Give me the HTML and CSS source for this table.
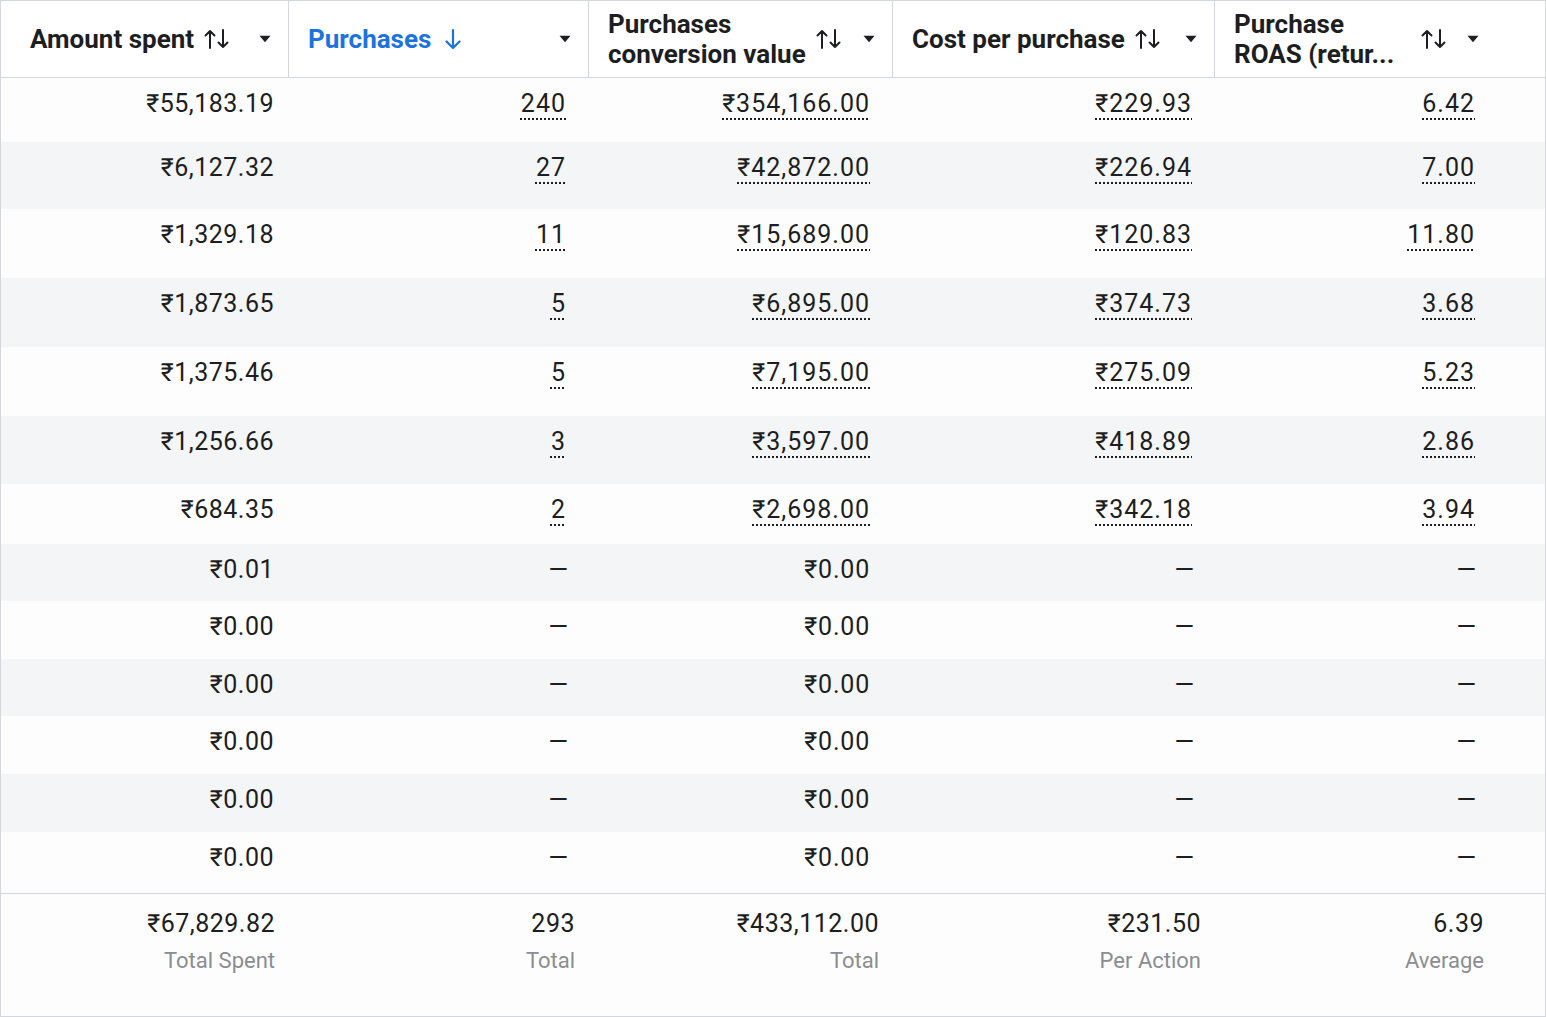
FILE: index.html
```html
<!DOCTYPE html>
<html lang="en">
<head>
<meta charset="utf-8">
<title>Ads table</title>
<link rel="stylesheet" href="styles.css">
</head>
<body>
<svg width="0" height="0" class="defs" aria-hidden="true">
  <defs>
    <symbol id="sort" viewBox="0 0 26 22">
      <path d="M6 20V3M1.5 7.5L6 3l4.5 4.5M19 2v17M14.5 14.5L19 19l4.5-4.5" fill="none" stroke="currentColor" stroke-width="2" stroke-linecap="round" stroke-linejoin="round"/>
    </symbol>
    <symbol id="caret" viewBox="0 0 12 8">
      <path d="M0.5 0.8h11L6 7.2z" fill="currentColor"/>
    </symbol>
    <symbol id="down" viewBox="0 0 16 22">
      <path d="M8 2v18M1.5 13.5L8 20l6.5-6.5" fill="none" stroke="currentColor" stroke-width="2.2" stroke-linecap="round" stroke-linejoin="round"/>
    </symbol>
  </defs>
</svg>
<div class="table">
  <div class="row head">
    <div class="hcell c1">
      <span class="label">Amount spent</span>
      <svg class="sort"><use href="#sort"/></svg>
      <svg class="caret"><use href="#caret"/></svg>
    </div>
    <div class="hcell c2 active">
      <span class="label">Purchases</span>
      <svg class="down"><use href="#down"/></svg>
      <svg class="caret"><use href="#caret"/></svg>
    </div>
    <div class="hcell c3">
      <span class="label">Purchases<br>conversion value</span>
      <svg class="sort"><use href="#sort"/></svg>
      <svg class="caret"><use href="#caret"/></svg>
    </div>
    <div class="hcell c4">
      <span class="label">Cost per purchase</span>
      <svg class="sort"><use href="#sort"/></svg>
      <svg class="caret"><use href="#caret"/></svg>
    </div>
    <div class="hcell c5">
      <span class="label fixed">Purchase<br>ROAS (retur...</span>
      <svg class="sort"><use href="#sort"/></svg>
      <svg class="caret"><use href="#caret"/></svg>
    </div>
  </div>

  <div class="row body h64">
    <div class="cell c1">₹55,183.19</div>
    <div class="cell c2"><span class="link">240</span></div>
    <div class="cell c3"><span class="link">₹354,166.00</span></div>
    <div class="cell c4"><span class="link">₹229.93</span></div>
    <div class="cell c5"><span class="link">6.42</span></div>
  </div>
  <div class="row body alt h67">
    <div class="cell c1">₹6,127.32</div>
    <div class="cell c2"><span class="link">27</span></div>
    <div class="cell c3"><span class="link">₹42,872.00</span></div>
    <div class="cell c4"><span class="link">₹226.94</span></div>
    <div class="cell c5"><span class="link">7.00</span></div>
  </div>
  <div class="row body h69">
    <div class="cell c1">₹1,329.18</div>
    <div class="cell c2"><span class="link">11</span></div>
    <div class="cell c3"><span class="link">₹15,689.00</span></div>
    <div class="cell c4"><span class="link">₹120.83</span></div>
    <div class="cell c5"><span class="link">11.80</span></div>
  </div>
  <div class="row body alt h69">
    <div class="cell c1">₹1,873.65</div>
    <div class="cell c2"><span class="link">5</span></div>
    <div class="cell c3"><span class="link">₹6,895.00</span></div>
    <div class="cell c4"><span class="link">₹374.73</span></div>
    <div class="cell c5"><span class="link">3.68</span></div>
  </div>
  <div class="row body h69">
    <div class="cell c1">₹1,375.46</div>
    <div class="cell c2"><span class="link">5</span></div>
    <div class="cell c3"><span class="link">₹7,195.00</span></div>
    <div class="cell c4"><span class="link">₹275.09</span></div>
    <div class="cell c5"><span class="link">5.23</span></div>
  </div>
  <div class="row body alt h68">
    <div class="cell c1">₹1,256.66</div>
    <div class="cell c2"><span class="link">3</span></div>
    <div class="cell c3"><span class="link">₹3,597.00</span></div>
    <div class="cell c4"><span class="link">₹418.89</span></div>
    <div class="cell c5"><span class="link">2.86</span></div>
  </div>
  <div class="row body h60">
    <div class="cell c1">₹684.35</div>
    <div class="cell c2"><span class="link">2</span></div>
    <div class="cell c3"><span class="link">₹2,698.00</span></div>
    <div class="cell c4"><span class="link">₹342.18</span></div>
    <div class="cell c5"><span class="link">3.94</span></div>
  </div>
  <div class="row body alt h57">
    <div class="cell c1">₹0.01</div>
    <div class="cell c2 dash">—</div>
    <div class="cell c3">₹0.00</div>
    <div class="cell c4 dash">—</div>
    <div class="cell c5 dash">—</div>
  </div>
  <div class="row body h58">
    <div class="cell c1">₹0.00</div>
    <div class="cell c2 dash">—</div>
    <div class="cell c3">₹0.00</div>
    <div class="cell c4 dash">—</div>
    <div class="cell c5 dash">—</div>
  </div>
  <div class="row body alt h57">
    <div class="cell c1">₹0.00</div>
    <div class="cell c2 dash">—</div>
    <div class="cell c3">₹0.00</div>
    <div class="cell c4 dash">—</div>
    <div class="cell c5 dash">—</div>
  </div>
  <div class="row body h58">
    <div class="cell c1">₹0.00</div>
    <div class="cell c2 dash">—</div>
    <div class="cell c3">₹0.00</div>
    <div class="cell c4 dash">—</div>
    <div class="cell c5 dash">—</div>
  </div>
  <div class="row body alt h58">
    <div class="cell c1">₹0.00</div>
    <div class="cell c2 dash">—</div>
    <div class="cell c3">₹0.00</div>
    <div class="cell c4 dash">—</div>
    <div class="cell c5 dash">—</div>
  </div>
  <div class="row body h61">
    <div class="cell c1">₹0.00</div>
    <div class="cell c2 dash">—</div>
    <div class="cell c3">₹0.00</div>
    <div class="cell c4 dash">—</div>
    <div class="cell c5 dash">—</div>
  </div>

  <div class="row foot">
    <div class="fcell c1"><span class="val">₹67,829.82</span><span class="sub">Total Spent</span></div>
    <div class="fcell c2"><span class="val">293</span><span class="sub">Total</span></div>
    <div class="fcell c3"><span class="val">₹433,112.00</span><span class="sub">Total</span></div>
    <div class="fcell c4"><span class="val">₹231.50</span><span class="sub">Per Action</span></div>
    <div class="fcell c5"><span class="val">6.39</span><span class="sub">Average</span></div>
  </div>
</div>
</body>
</html>
```
FILE: styles.css
```css
* { box-sizing: border-box; }

html, body {
  margin: 0;
  padding: 0;
  background: #ffffff;
}

body {
  font-family: Roboto, "Liberation Sans", Arial, sans-serif;
  color: #1c1e21;
  width: 1546px;
  height: 1017px;
  overflow: hidden;
}

.defs {
  position: absolute;
  width: 0;
  height: 0;
}

.table {
  width: 1546px;
  height: 1017px;
  border: 1px solid #d3d6da;
  background: #fdfdfd;
  display: flex;
  flex-direction: column;
}

.row {
  display: grid;
  grid-template-columns: 287px 300px 304px 322px 1fr;
}

/* Header */
.head {
  height: 77px;
  border-bottom: 1px solid #d3d6da;
  background: #ffffff;
}

.hcell {
  display: flex;
  align-items: center;
  padding: 0 17px 0 19px;
  font-size: 26px;
  font-weight: 700;
  line-height: 30px;
  color: #1c1e21;
}

.hcell + .hcell {
  border-left: 1px solid #d3d6da;
}

.hcell.c1 { padding-left: 29px; }
.hcell.c5 { padding-right: 66px; }

.label {
  white-space: nowrap;
}

.label.fixed {
  width: 177px;
  overflow: hidden;
}

.sort {
  width: 26px;
  height: 22px;
  margin-left: 10px;
  flex: none;
  color: #1c1e21;
}

.down {
  width: 16px;
  height: 22px;
  margin-left: 14px;
  flex: none;
  color: #1a73e0;
}

.caret {
  width: 12px;
  height: 8px;
  margin-left: auto;
  flex: none;
  color: #1c1e21;
}

.hcell.active {
  color: #1a73e0;
}

/* Body */
.body {
  background: #fdfdfd;
}

.body.alt {
  background: #f4f5f6;
}

.h57 { height: 57px; }
.h58 { height: 58px; }
.h60 { height: 60px; }
.h61 { height: 61px; }
.h64 { height: 64px; }
.h67 { height: 67px; }
.h68 { height: 68px; }
.h69 { height: 69px; }

.cell {
  text-align: right;
  font-size: 25px;
  line-height: 30px;
  padding-top: 11px;
  padding-right: 22px;
  letter-spacing: 0.8px;
  color: #1c1e21;
}

.cell.c1 {
  padding-right: 14px;
  letter-spacing: 0.5px;
}
.cell.c5 { padding-right: 70px; }

.cell.dash {
  padding-right: 20px;
  letter-spacing: 0;
}
.cell.c5.dash { padding-right: 69px; }

.link {
  letter-spacing: 1px;
  text-decoration: underline dotted #1c1e21;
  text-decoration-thickness: 2px;
  text-underline-offset: 6px;
}

/* Footer */
.foot {
  flex: 1;
  border-top: 1px solid #d3d6da;
  background: #fdfdfd;
}

.fcell {
  display: flex;
  flex-direction: column;
  align-items: flex-end;
  padding-top: 15px;
  padding-right: 13px;
}

.fcell.c5 { padding-right: 61px; }

.val {
  font-size: 25px;
  line-height: 30px;
  letter-spacing: 0.5px;
  color: #1c1e21;
}

.sub {
  font-size: 22px;
  line-height: 30px;
  margin-top: 7px;
  color: #8a8d91;
}
```
